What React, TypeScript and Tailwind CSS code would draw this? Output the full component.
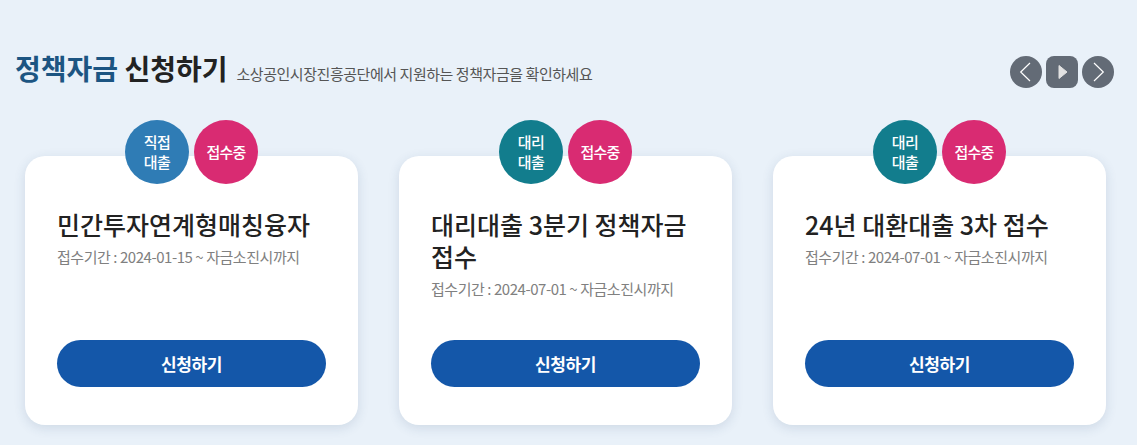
import React from 'react';

type Fund = {
  kind: string[];
  kindColor: string;
  title: string;
  period: string;
};

const funds: Fund[] = [
  {
    kind: ['직접', '대출'],
    kindColor: 'bg-[#2f7cb5]',
    title: '민간투자연계형매칭융자',
    period: '접수기간 : 2024-01-15 ~ 자금소진시까지',
  },
  {
    kind: ['대리', '대출'],
    kindColor: 'bg-[#127d8d]',
    title: '대리대출 3분기 정책자금 접수',
    period: '접수기간 : 2024-07-01 ~ 자금소진시까지',
  },
  {
    kind: ['대리', '대출'],
    kindColor: 'bg-[#127d8d]',
    title: '24년 대환대출 3차 접수',
    period: '접수기간 : 2024-07-01 ~ 자금소진시까지',
  },
];

const FundCard: React.FC<{ fund: Fund }> = ({ fund }) => (
  <div className="flex flex-col items-center w-[333px]">
    <div className="relative z-10 flex gap-[5px]">
      <div className={`w-[64px] h-[64px] rounded-full ${fund.kindColor} flex flex-col items-center justify-center text-white text-[15px] leading-[20px] font-medium tracking-[-0.03em]`}>
        <span className="block">{fund.kind[0]}</span>
        <span className="block">{fund.kind[1]}</span>
      </div>
      <div className="w-[64px] h-[64px] rounded-full bg-[#d92b72] flex items-center justify-center text-white text-[15px] leading-[20px] font-medium tracking-[-0.05em]">
        접수중
      </div>
    </div>
    <div className="-mt-[28px] w-full h-[269px] bg-white rounded-[20px] shadow-[0_3px_12px_rgba(40,70,110,0.14)] px-[32px] pt-[52px] pb-[38px] flex flex-col">
      <h3 className="text-[25px] leading-[32px] text-[#222] font-medium break-keep">{fund.title}</h3>
      <p className="mt-[7px] text-[15px] leading-[20px] tracking-[-0.03em] text-[#808080]">{fund.period}</p>
      <button className="mt-auto w-full h-[47px] rounded-full bg-[#1457a9] text-white text-[17px] font-bold tracking-[-0.02em]">
        신청하기
      </button>
    </div>
  </div>
);

export default function App() {
  return (
    <div
      className="w-full h-[445px] bg-[#e9f1f9] overflow-hidden"
      style={{ fontFamily: '"Noto Sans CJK KR", "Noto Sans", sans-serif' }}
    >
      <div className="flex items-start justify-between pl-[15px] pr-[23px] pt-[50px]">
        <div className="flex items-baseline gap-[9px]">
          <h2 className="text-[28px] leading-[36px] font-bold text-[#222]">
            <span className="text-[#1c5582]">정책자금</span> 신청하기
          </h2>
          <p className="text-[15px] tracking-[-0.03em] text-[#555]">소상공인시장진흥공단에서 지원하는 정책자금을 확인하세요</p>
        </div>
        <div className="flex gap-[4px] mt-[6px]">
          <button className="w-[32px] h-[32px] rounded-full bg-[#636b76] flex items-center justify-center">
            <svg width="32" height="32" viewBox="0 0 32 32" fill="none">
              <path d="M20 7 L10.7 16 L20 25" stroke="white" strokeWidth="1.2" />
            </svg>
          </button>
          <button className="w-[32px] h-[32px] rounded-[8px] bg-[#636b76] flex items-center justify-center">
            <svg width="32" height="32" viewBox="0 0 32 32">
              <path d="M13 9.5 L21 16 L13 22.5 Z" fill="#e2e2e2" stroke="#e2e2e2" strokeWidth="1" strokeLinejoin="round" />
            </svg>
          </button>
          <button className="w-[32px] h-[32px] rounded-full bg-[#636b76] flex items-center justify-center">
            <svg width="32" height="32" viewBox="0 0 32 32" fill="none">
              <path d="M12 7 L21.3 16 L12 25" stroke="white" strokeWidth="1.2" />
            </svg>
          </button>
        </div>
      </div>
      <div className="flex gap-[41px] pl-[25px] mt-[32px]">
        {funds.map((f, i) => (
          <FundCard key={i} fund={f} />
        ))}
      </div>
    </div>
  );
}
